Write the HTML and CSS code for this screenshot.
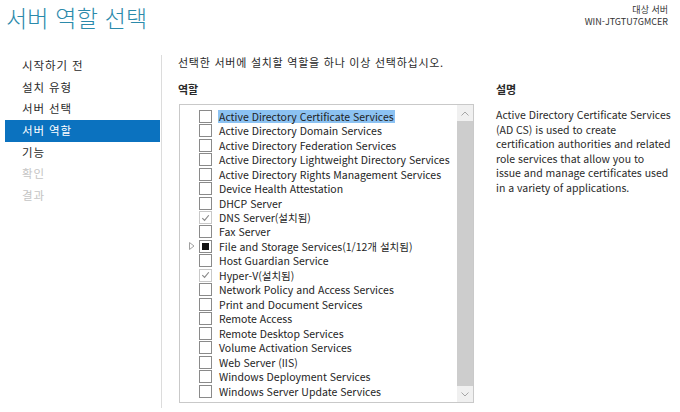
FILE: index.html
```html
<!DOCTYPE html>
<html lang="ko">
<head>
<meta charset="utf-8">
<link rel="stylesheet" href="styles.css">
</head>
<body>
<div class="page">
  <header class="header">
    <h1 class="title">서버 역할 선택</h1>
    <div class="server">
      <div>대상 서버</div>
      <div>WIN-JTGTU7GMCER</div>
    </div>
  </header>
  <div class="main">
    <nav class="nav">
      <div class="nav-item">시작하기 전</div>
      <div class="nav-item">설치 유형</div>
      <div class="nav-item">서버 선택</div>
      <div class="nav-item active">서버 역할</div>
      <div class="nav-item">기능</div>
      <div class="nav-item disabled">확인</div>
      <div class="nav-item disabled">결과</div>
    </nav>
    <section class="content">
      <p class="instruction">선택한 서버에 설치할 역할을 하나 이상 선택하십시오.</p>
      <div class="columns">
        <div class="roles">
          <div class="label">역할</div>
          <div class="listbox">
            <div class="list">
              <div class="row"><span class="exp"></span><span class="cb"></span><span class="txt sel">Active Directory Certificate Services</span></div>
              <div class="row"><span class="exp"></span><span class="cb"></span><span class="txt">Active Directory Domain Services</span></div>
              <div class="row"><span class="exp"></span><span class="cb"></span><span class="txt">Active Directory Federation Services</span></div>
              <div class="row"><span class="exp"></span><span class="cb"></span><span class="txt">Active Directory Lightweight Directory Services</span></div>
              <div class="row"><span class="exp"></span><span class="cb"></span><span class="txt">Active Directory Rights Management Services</span></div>
              <div class="row"><span class="exp"></span><span class="cb"></span><span class="txt">Device Health Attestation</span></div>
              <div class="row"><span class="exp"></span><span class="cb"></span><span class="txt">DHCP Server</span></div>
              <div class="row"><span class="exp"></span><span class="cb checked"><svg viewBox="0 0 12 12" width="12" height="12"><path d="M2.5 6.2 L5 8.7 L9.6 3" fill="none" stroke="#8a8a8a" stroke-width="1.3"/></svg></span><span class="txt">DNS Server(설치됨)</span></div>
              <div class="row"><span class="exp"></span><span class="cb"></span><span class="txt">Fax Server</span></div>
              <div class="row"><span class="exp"><svg viewBox="0 0 6 8" width="6" height="8"><path d="M0.5 0.5 L5 4 L0.5 7.5 Z" fill="none" stroke="#a0a0a0" stroke-width="1"/></svg></span><span class="cb partial"><span class="fill"></span></span><span class="txt">File and Storage Services(1/12개 설치됨)</span></div>
              <div class="row"><span class="exp"></span><span class="cb"></span><span class="txt">Host Guardian Service</span></div>
              <div class="row"><span class="exp"></span><span class="cb checked"><svg viewBox="0 0 12 12" width="12" height="12"><path d="M2.5 6.2 L5 8.7 L9.6 3" fill="none" stroke="#8a8a8a" stroke-width="1.3"/></svg></span><span class="txt">Hyper-V(설치됨)</span></div>
              <div class="row"><span class="exp"></span><span class="cb"></span><span class="txt">Network Policy and Access Services</span></div>
              <div class="row"><span class="exp"></span><span class="cb"></span><span class="txt">Print and Document Services</span></div>
              <div class="row"><span class="exp"></span><span class="cb"></span><span class="txt">Remote Access</span></div>
              <div class="row"><span class="exp"></span><span class="cb"></span><span class="txt">Remote Desktop Services</span></div>
              <div class="row"><span class="exp"></span><span class="cb"></span><span class="txt">Volume Activation Services</span></div>
              <div class="row"><span class="exp"></span><span class="cb"></span><span class="txt">Web Server (IIS)</span></div>
              <div class="row"><span class="exp"></span><span class="cb"></span><span class="txt">Windows Deployment Services</span></div>
              <div class="row"><span class="exp"></span><span class="cb"></span><span class="txt">Windows Server Update Services</span></div>
            </div>
            <div class="scrollbar">
              <div class="arrow"><svg viewBox="0 0 8 5" width="8" height="5"><path d="M0.5 4.5 L4 1 L7.5 4.5" fill="none" stroke="#a6a6a6" stroke-width="1"/></svg></div>
              <div class="thumb"></div>
              <div class="arrow"><svg viewBox="0 0 8 5" width="8" height="5"><path d="M0.5 0.5 L4 4 L7.5 0.5" fill="none" stroke="#a6a6a6" stroke-width="1"/></svg></div>
            </div>
          </div>
        </div>
        <div class="desc">
          <div class="label">설명</div>
          <p class="desc-text">Active Directory Certificate Services<br>(AD CS) is used to create<br>certification authorities and related<br>role services that allow you to<br>issue and manage certificates used<br>in a variety of applications.</p>
        </div>
      </div>
    </section>
  </div>
</div>
</body>
</html>
```

FILE: styles.css
```css
* { box-sizing: border-box; }
html, body { margin: 0; padding: 0; background: #fff; }
body {
  font-family: "Noto Sans CJK KR", "Noto Sans", sans-serif;
  font-size: 10.5px;
  color: #1e1e1e;
  width: 680px;
  height: 412px;
  overflow: hidden;
}
.page { width: 680px; height: 412px; }
.header {
  display: flex;
  justify-content: space-between;
  align-items: flex-start;
  height: 52px;
  padding: 0 12px 0 6px;
}
.title {
  margin: 0;
  font-size: 23px;
  font-weight: 300;
  line-height: 34px;
  color: #2b8aab;
  letter-spacing: 0.2px;
}
.server {
  text-align: right;
  font-size: 9px;
  line-height: 12px;
  margin-top: 4px;
  color: #333;
}
.main {
  display: flex;
  height: 353px;
  margin-top: 3px;
}
.nav {
  width: 157px;
  margin-left: 5px;
  border-right: 1px solid #dcdcdc;
}
.nav-item {
  height: 21.7px;
  line-height: 21.7px;
  padding-left: 17px;
  font-size: 11.5px;
  color: #2a2a2a;
  letter-spacing: 0.9px;
}
.nav-item.active {
  background: #0b72bf;
  color: #fff;
  margin-right: 1px;
}
.nav-item.disabled { color: #c4c4c4; }
.content {
  flex: 1;
  padding-left: 16px;
}
.instruction {
  margin: 0;
  line-height: 14px;
  font-size: 11px;
  color: #2a2a2a;
  letter-spacing: 0.75px;
}
.columns {
  display: flex;
  margin-top: 13px;
  gap: 22px;
}
.roles { width: 296px; }
.label {
  font-weight: bold;
  line-height: 14px;
  height: 22px;
  font-size: 11px;
  color: #2a2a2a;
}
.listbox {
  margin-left: 1px;
  width: 295px;
  height: 299px;
  border: 1px solid #c9c9c9;
  display: flex;
}
.list {
  flex: 1;
  padding-top: 4px;
}
.row {
  display: flex;
  align-items: center;
  height: 14.47px;
}
.exp {
  width: 19px;
  padding-left: 9px;
  display: flex;
  align-items: center;
}
.cb {
  width: 13px;
  height: 13px;
  border: 1px solid #8a8a8a;
  background: #fff;
  margin-right: 6px;
  display: flex;
  align-items: center;
  justify-content: center;
  flex: none;
}
.cb.checked { border-color: #c8c8c8; }
.cb.checked svg { display: block; }
.cb.partial .fill {
  width: 7px;
  height: 7px;
  background: #111;
}
.txt {
  line-height: 13px;
  white-space: nowrap;
  padding: 0 1px;
}
.txt.sel { background: #8cc2f2; }
.scrollbar {
  width: 16px;
  display: flex;
  flex-direction: column;
  background: #f0f0f0;
}
.arrow {
  height: 16px;
  display: flex;
  align-items: center;
  justify-content: center;
  background: #f0f0f0;
}
.thumb {
  flex: 1;
  background: #cdcdcd;
}
.desc { width: 182px; }
.desc-text {
  margin: 4px 0 0 0;
  line-height: 14.5px;
  color: #2a2a2a;
  white-space: nowrap;
}
```
